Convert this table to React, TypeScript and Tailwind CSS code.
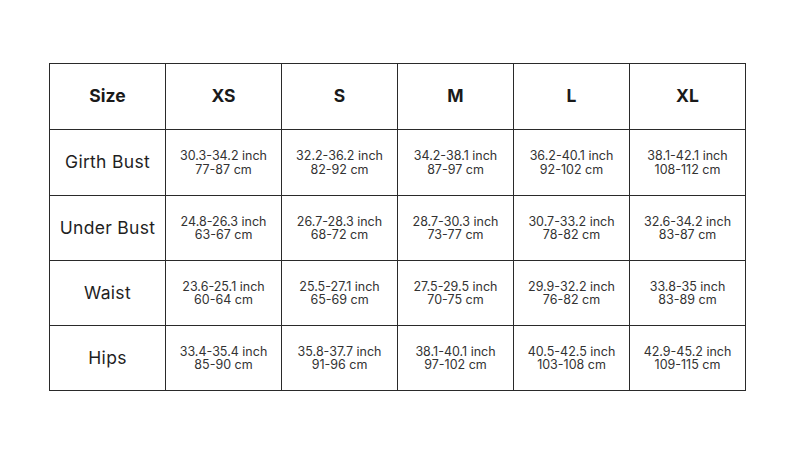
import { Fragment } from "react";

const sizes = ["XS", "S", "M", "L", "XL"];

const rows: { label: string; cells: [string, string][] }[] = [
  {
    label: "Girth Bust",
    cells: [
      ["30.3-34.2 inch", "77-87 cm"],
      ["32.2-36.2 inch", "82-92 cm"],
      ["34.2-38.1 inch", "87-97 cm"],
      ["36.2-40.1 inch", "92-102 cm"],
      ["38.1-42.1 inch", "108-112 cm"],
    ],
  },
  {
    label: "Under Bust",
    cells: [
      ["24.8-26.3 inch", "63-67 cm"],
      ["26.7-28.3 inch", "68-72 cm"],
      ["28.7-30.3 inch", "73-77 cm"],
      ["30.7-33.2 inch", "78-82 cm"],
      ["32.6-34.2 inch", "83-87 cm"],
    ],
  },
  {
    label: "Waist",
    cells: [
      ["23.6-25.1 inch", "60-64 cm"],
      ["25.5-27.1 inch", "65-69 cm"],
      ["27.5-29.5 inch", "70-75 cm"],
      ["29.9-32.2 inch", "76-82 cm"],
      ["33.8-35 inch", "83-89 cm"],
    ],
  },
  {
    label: "Hips",
    cells: [
      ["33.4-35.4 inch", "85-90 cm"],
      ["35.8-37.7 inch", "91-96 cm"],
      ["38.1-40.1 inch", "97-102 cm"],
      ["40.5-42.5 inch", "103-108 cm"],
      ["42.9-45.2 inch", "109-115 cm"],
    ],
  },
];

export default function App() {
  return (
    <div className="w-[794px] h-[455px] bg-white pt-[63px] pl-[49px] font-['Inter',sans-serif] text-[#1a1a1a]">
      <div className="grid grid-cols-[repeat(6,116px)] w-[697px] border-l border-t border-[#2a2a2a]">
        <div className="h-[66px] flex items-center justify-center border-r border-b border-[#2a2a2a] text-[17.5px] font-bold">Size</div>
        {sizes.map(s => (
          <div key={s} className="h-[66px] flex items-center justify-center border-r border-b border-[#2a2a2a] text-[17.5px] font-bold">{s}</div>
        ))}
        {rows.map((r, i) => (
          <Fragment key={r.label}>
            <div className={`${i === 0 ? "h-[66px]" : "h-[65px]"} flex items-center justify-center border-r border-b border-[#2a2a2a] text-[17.5px] tracking-[0.3px] text-[#1f1f1f]`}>{r.label}</div>
            {r.cells.map(([a, b], j) => (
              <div key={j} className={`${i === 0 ? "h-[66px]" : "h-[65px]"} flex flex-col items-center justify-center border-r border-b border-[#2a2a2a] text-[12.5px] leading-[13.5px] text-[#333]`}>
                <span>{a}</span>
                <span>{b}</span>
              </div>
            ))}
          </Fragment>
        ))}
      </div>
    </div>
  );
}
